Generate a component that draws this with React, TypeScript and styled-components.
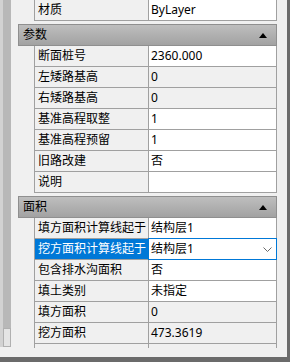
import React from "react";
import styled, { createGlobalStyle } from "styled-components";

const GlobalStyle = createGlobalStyle`
  html, body { margin: 0; padding: 0; background: #f0f0f0; overflow: hidden; }
  body {
    font-family: "Noto Sans", "Noto Sans CJK SC", sans-serif;
    font-size: 12px;
    color: #000;
  }
`;

const Frame = styled.div`
  width: 290px;
  height: 362px;
  box-sizing: border-box;
  display: flex;
  align-items: flex-start;
  background: #f0f0f0;
  border-right: 3px solid #6b6b6b;
  border-bottom: 5px solid #6b6b6b;
  padding-bottom: 9px;
`;

const ScrollBar = styled.div`
  width: 11px;
  box-sizing: border-box;
  border-left: 3px solid #d2d2d2;
  height: 347px;
  display: flex;
  flex-direction: column;
  background: #b8b8b8;
`;

const Thumb = styled.div`
  margin-top: auto;
  height: 19px;
  box-sizing: border-box;
  background: #e4e4e4;
  border: 1px solid #b0b0b0;
`;

const Viewport = styled.div`
  margin-left: 7px;
  width: 259px;
  height: 348px;
  overflow: hidden;
`;

const Header = styled.div`
  height: 22px;
  box-sizing: border-box;
  margin-top: 3px;
  border: 1px solid #8f8f8f;
  background: linear-gradient(#bebebe, #a2a2a2);
  display: flex;
  align-items: center;
  justify-content: space-between;
  padding: 0 9px 0 4px;
  line-height: 20px;
`;

const Row = styled.div`
  display: flex;
  height: 21px;
  box-sizing: border-box;
  margin-left: 16px;
  border-left: 1px solid #a0a0a0;
  border-right: 1px solid #a0a0a0;
  border-bottom: 1px solid #a0a0a0;
  line-height: 20px;
`;

const NameCell = styled.div<{ $selected?: boolean }>`
  width: 114px;
  flex: none;
  box-sizing: border-box;
  border-right: 1px solid #a0a0a0;
  padding-left: 3px;
  white-space: nowrap;
  overflow: hidden;
  background: ${(p) => (p.$selected ? "#0078d7" : "#f0f0f0")};
  color: ${(p) => (p.$selected ? "#fff" : "#000")};
`;

const ValueCell = styled.div<{ $readonly?: boolean; $selected?: boolean }>`
  flex: 1;
  display: flex;
  align-items: center;
  justify-content: space-between;
  padding: 0 4px 0 2px;
  white-space: nowrap;
  overflow: hidden;
  background: ${(p) => (p.$readonly ? "#f0f0f0" : "#fff")};
  outline: ${(p) => (p.$selected ? "1px solid #0078d7" : "none")};
`;

const Arrow = () => (
  <svg width="8" height="5" viewBox="0 0 8 5">
    <polygon points="0,5 8,5 4,0" fill="#000" />
  </svg>
);

const Chevron = () => (
  <svg width="9" height="5" viewBox="0 0 9 5">
    <polyline points="0.5,0.5 4.5,4.5 8.5,0.5" fill="none" stroke="#6a6a6a" strokeWidth="1" />
  </svg>
);

type Prop = { name: string; value: string; readonly?: boolean; selected?: boolean };

const params: Prop[] = [
  { name: "断面桩号", value: "2360.000" },
  { name: "左矮路基高", value: "0", readonly: true },
  { name: "右矮路基高", value: "0", readonly: true },
  { name: "基准高程取整", value: "1" },
  { name: "基准高程预留", value: "1" },
  { name: "旧路改建", value: "否" },
  { name: "说明", value: "" },
];

const areas: Prop[] = [
  { name: "填方面积计算线起于", value: "结构层1" },
  { name: "挖方面积计算线起于", value: "结构层1", selected: true },
  { name: "包含排水沟面积", value: "否" },
  { name: "填土类别", value: "未指定" },
  { name: "填方面积", value: "0", readonly: true },
  { name: "挖方面积", value: "473.3619", readonly: true },
  { name: "", value: "", readonly: true },
];

const PropRow = ({ p }: { p: Prop }) => (
  <Row>
    <NameCell $selected={p.selected}>{p.name}</NameCell>
    <ValueCell $readonly={p.readonly} $selected={p.selected}>
      <span>{p.value}</span>
      {p.selected && <Chevron />}
    </ValueCell>
  </Row>
);

export default function App() {
  return (
    <>
      <GlobalStyle />
      <Frame>
        <ScrollBar>
          <Thumb />
        </ScrollBar>
        <Viewport>
          <PropRow p={{ name: "材质", value: "ByLayer" }} />
          <Header>
            <span>参数</span>
            <Arrow />
          </Header>
          {params.map((p, i) => (
            <PropRow key={i} p={p} />
          ))}
          <Header>
            <span>面积</span>
            <Arrow />
          </Header>
          {areas.map((p, i) => (
            <PropRow key={i} p={p} />
          ))}
        </Viewport>
      </Frame>
    </>
  );
}
